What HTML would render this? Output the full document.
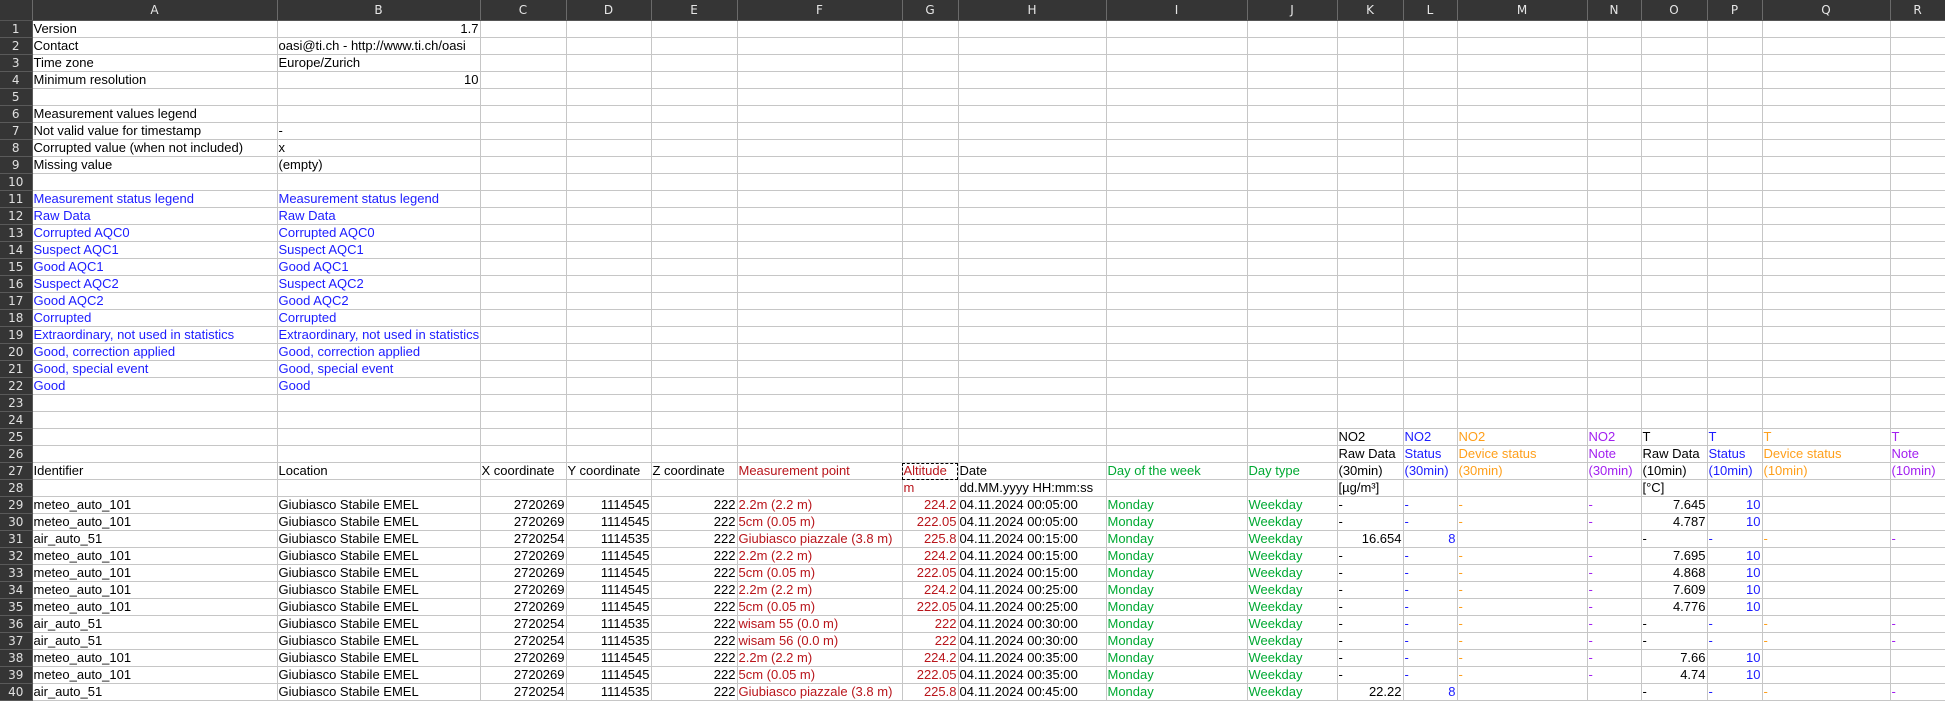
<!DOCTYPE html>
<html><head><meta charset="utf-8">
<style>
html,body{margin:0;padding:0;background:#fff;}
body{width:1945px;height:701px;overflow:hidden;font-family:"Liberation Sans",sans-serif;font-size:13px;color:#000;}
table{border-collapse:collapse;table-layout:fixed;width:1945px;}
td{height:16px;padding:0 1px;border-right:1px solid #c6c6c6;border-bottom:1px solid #c6c6c6;white-space:nowrap;overflow:hidden;line-height:16px;vertical-align:bottom;}
tr.h td{height:20px;background:#353535;color:#e6e6e6;text-align:center;border-right:1px solid #6a6a6a;border-bottom:1px solid #555;font-family:"DejaVu Sans",sans-serif;font-size:12px;vertical-align:middle;}
td.rh{background:#353535;color:#e0e0e0;text-align:center;border-right:1px solid #5a5a5a;border-bottom:1px solid #5a5a5a;font-family:"DejaVu Sans",sans-serif;font-size:12px;}
.r{text-align:right;}
.b{color:#1c1cff;}.rd{color:#b8151b;}.g{color:#00a933;}.o{color:#ff9f1a;}.p{color:#a21ff0;}
.alt{outline:1px dashed #000;outline-offset:-1px;}
</style></head><body>
<table>
<colgroup><col style="width:32px"><col style="width:245px"><col style="width:203px"><col style="width:86px"><col style="width:85px"><col style="width:86px"><col style="width:165px"><col style="width:56px"><col style="width:148px"><col style="width:141px"><col style="width:90px"><col style="width:66px"><col style="width:54px"><col style="width:130px"><col style="width:54px"><col style="width:66px"><col style="width:55px"><col style="width:128px"><col style="width:55px"></colgroup>
<tr class="h"><td></td><td>A</td><td>B</td><td>C</td><td>D</td><td>E</td><td>F</td><td>G</td><td>H</td><td>I</td><td>J</td><td>K</td><td>L</td><td>M</td><td>N</td><td>O</td><td>P</td><td>Q</td><td>R</td></tr>
<tr><td class="rh">1</td><td>Version</td><td class="r">1.7</td><td></td><td></td><td></td><td></td><td></td><td></td><td></td><td></td><td></td><td></td><td></td><td></td><td></td><td></td><td></td><td></td></tr>
<tr><td class="rh">2</td><td>Contact</td><td>oasi@ti.ch - http://www.ti.ch/oasi</td><td></td><td></td><td></td><td></td><td></td><td></td><td></td><td></td><td></td><td></td><td></td><td></td><td></td><td></td><td></td><td></td></tr>
<tr><td class="rh">3</td><td>Time zone</td><td>Europe/Zurich</td><td></td><td></td><td></td><td></td><td></td><td></td><td></td><td></td><td></td><td></td><td></td><td></td><td></td><td></td><td></td><td></td></tr>
<tr><td class="rh">4</td><td>Minimum resolution</td><td class="r">10</td><td></td><td></td><td></td><td></td><td></td><td></td><td></td><td></td><td></td><td></td><td></td><td></td><td></td><td></td><td></td><td></td></tr>
<tr><td class="rh">5</td><td></td><td></td><td></td><td></td><td></td><td></td><td></td><td></td><td></td><td></td><td></td><td></td><td></td><td></td><td></td><td></td><td></td><td></td></tr>
<tr><td class="rh">6</td><td>Measurement values legend</td><td></td><td></td><td></td><td></td><td></td><td></td><td></td><td></td><td></td><td></td><td></td><td></td><td></td><td></td><td></td><td></td><td></td></tr>
<tr><td class="rh">7</td><td>Not valid value for timestamp</td><td>-</td><td></td><td></td><td></td><td></td><td></td><td></td><td></td><td></td><td></td><td></td><td></td><td></td><td></td><td></td><td></td><td></td></tr>
<tr><td class="rh">8</td><td>Corrupted value (when not included)</td><td>x</td><td></td><td></td><td></td><td></td><td></td><td></td><td></td><td></td><td></td><td></td><td></td><td></td><td></td><td></td><td></td><td></td></tr>
<tr><td class="rh">9</td><td>Missing value</td><td>(empty)</td><td></td><td></td><td></td><td></td><td></td><td></td><td></td><td></td><td></td><td></td><td></td><td></td><td></td><td></td><td></td><td></td></tr>
<tr><td class="rh">10</td><td></td><td></td><td></td><td></td><td></td><td></td><td></td><td></td><td></td><td></td><td></td><td></td><td></td><td></td><td></td><td></td><td></td><td></td></tr>
<tr><td class="rh">11</td><td class="b">Measurement status legend</td><td class="b">Measurement status legend</td><td></td><td></td><td></td><td></td><td></td><td></td><td></td><td></td><td></td><td></td><td></td><td></td><td></td><td></td><td></td><td></td></tr>
<tr><td class="rh">12</td><td class="b">Raw Data</td><td class="b">Raw Data</td><td></td><td></td><td></td><td></td><td></td><td></td><td></td><td></td><td></td><td></td><td></td><td></td><td></td><td></td><td></td><td></td></tr>
<tr><td class="rh">13</td><td class="b">Corrupted AQC0</td><td class="b">Corrupted AQC0</td><td></td><td></td><td></td><td></td><td></td><td></td><td></td><td></td><td></td><td></td><td></td><td></td><td></td><td></td><td></td><td></td></tr>
<tr><td class="rh">14</td><td class="b">Suspect AQC1</td><td class="b">Suspect AQC1</td><td></td><td></td><td></td><td></td><td></td><td></td><td></td><td></td><td></td><td></td><td></td><td></td><td></td><td></td><td></td><td></td></tr>
<tr><td class="rh">15</td><td class="b">Good AQC1</td><td class="b">Good AQC1</td><td></td><td></td><td></td><td></td><td></td><td></td><td></td><td></td><td></td><td></td><td></td><td></td><td></td><td></td><td></td><td></td></tr>
<tr><td class="rh">16</td><td class="b">Suspect AQC2</td><td class="b">Suspect AQC2</td><td></td><td></td><td></td><td></td><td></td><td></td><td></td><td></td><td></td><td></td><td></td><td></td><td></td><td></td><td></td><td></td></tr>
<tr><td class="rh">17</td><td class="b">Good AQC2</td><td class="b">Good AQC2</td><td></td><td></td><td></td><td></td><td></td><td></td><td></td><td></td><td></td><td></td><td></td><td></td><td></td><td></td><td></td><td></td></tr>
<tr><td class="rh">18</td><td class="b">Corrupted</td><td class="b">Corrupted</td><td></td><td></td><td></td><td></td><td></td><td></td><td></td><td></td><td></td><td></td><td></td><td></td><td></td><td></td><td></td><td></td></tr>
<tr><td class="rh">19</td><td class="b">Extraordinary, not used in statistics</td><td class="b">Extraordinary, not used in statistics</td><td></td><td></td><td></td><td></td><td></td><td></td><td></td><td></td><td></td><td></td><td></td><td></td><td></td><td></td><td></td><td></td></tr>
<tr><td class="rh">20</td><td class="b">Good, correction applied</td><td class="b">Good, correction applied</td><td></td><td></td><td></td><td></td><td></td><td></td><td></td><td></td><td></td><td></td><td></td><td></td><td></td><td></td><td></td><td></td></tr>
<tr><td class="rh">21</td><td class="b">Good, special event</td><td class="b">Good, special event</td><td></td><td></td><td></td><td></td><td></td><td></td><td></td><td></td><td></td><td></td><td></td><td></td><td></td><td></td><td></td><td></td></tr>
<tr><td class="rh">22</td><td class="b">Good</td><td class="b">Good</td><td></td><td></td><td></td><td></td><td></td><td></td><td></td><td></td><td></td><td></td><td></td><td></td><td></td><td></td><td></td><td></td></tr>
<tr><td class="rh">23</td><td></td><td></td><td></td><td></td><td></td><td></td><td></td><td></td><td></td><td></td><td></td><td></td><td></td><td></td><td></td><td></td><td></td><td></td></tr>
<tr><td class="rh">24</td><td></td><td></td><td></td><td></td><td></td><td></td><td></td><td></td><td></td><td></td><td></td><td></td><td></td><td></td><td></td><td></td><td></td><td></td></tr>
<tr><td class="rh">25</td><td></td><td></td><td></td><td></td><td></td><td></td><td></td><td></td><td></td><td></td><td>NO2</td><td class="b">NO2</td><td class="o">NO2</td><td class="p">NO2</td><td>T</td><td class="b">T</td><td class="o">T</td><td class="p">T</td></tr>
<tr><td class="rh">26</td><td></td><td></td><td></td><td></td><td></td><td></td><td></td><td></td><td></td><td></td><td>Raw Data</td><td class="b">Status</td><td class="o">Device status</td><td class="p">Note</td><td>Raw Data</td><td class="b">Status</td><td class="o">Device status</td><td class="p">Note</td></tr>
<tr><td class="rh">27</td><td>Identifier</td><td>Location</td><td>X coordinate</td><td>Y coordinate</td><td>Z coordinate</td><td class="rd">Measurement point</td><td class="rd alt">Altitude</td><td>Date</td><td class="g">Day of the week</td><td class="g">Day type</td><td>(30min)</td><td class="b">(30min)</td><td class="o">(30min)</td><td class="p">(30min)</td><td>(10min)</td><td class="b">(10min)</td><td class="o">(10min)</td><td class="p">(10min)</td></tr>
<tr><td class="rh">28</td><td></td><td></td><td></td><td></td><td></td><td></td><td class="rd">m</td><td>dd.MM.yyyy HH:mm:ss</td><td></td><td></td><td>[µg/m³]</td><td></td><td></td><td></td><td>[°C]</td><td></td><td></td><td></td></tr>
<tr><td class="rh">29</td><td>meteo_auto_101</td><td>Giubiasco Stabile EMEL</td><td class="r">2720269</td><td class="r">1114545</td><td class="r">222</td><td class="rd">2.2m (2.2 m)</td><td class="rd r">224.2</td><td>04.11.2024 00:05:00</td><td class="g">Monday</td><td class="g">Weekday</td><td>-</td><td class="b">-</td><td class="o">-</td><td class="p">-</td><td class="r">7.645</td><td class="b r">10</td><td></td><td></td></tr>
<tr><td class="rh">30</td><td>meteo_auto_101</td><td>Giubiasco Stabile EMEL</td><td class="r">2720269</td><td class="r">1114545</td><td class="r">222</td><td class="rd">5cm (0.05 m)</td><td class="rd r">222.05</td><td>04.11.2024 00:05:00</td><td class="g">Monday</td><td class="g">Weekday</td><td>-</td><td class="b">-</td><td class="o">-</td><td class="p">-</td><td class="r">4.787</td><td class="b r">10</td><td></td><td></td></tr>
<tr><td class="rh">31</td><td>air_auto_51</td><td>Giubiasco Stabile EMEL</td><td class="r">2720254</td><td class="r">1114535</td><td class="r">222</td><td class="rd">Giubiasco piazzale (3.8 m)</td><td class="rd r">225.8</td><td>04.11.2024 00:15:00</td><td class="g">Monday</td><td class="g">Weekday</td><td class="r">16.654</td><td class="b r">8</td><td></td><td></td><td>-</td><td class="b">-</td><td class="o">-</td><td class="p">-</td></tr>
<tr><td class="rh">32</td><td>meteo_auto_101</td><td>Giubiasco Stabile EMEL</td><td class="r">2720269</td><td class="r">1114545</td><td class="r">222</td><td class="rd">2.2m (2.2 m)</td><td class="rd r">224.2</td><td>04.11.2024 00:15:00</td><td class="g">Monday</td><td class="g">Weekday</td><td>-</td><td class="b">-</td><td class="o">-</td><td class="p">-</td><td class="r">7.695</td><td class="b r">10</td><td></td><td></td></tr>
<tr><td class="rh">33</td><td>meteo_auto_101</td><td>Giubiasco Stabile EMEL</td><td class="r">2720269</td><td class="r">1114545</td><td class="r">222</td><td class="rd">5cm (0.05 m)</td><td class="rd r">222.05</td><td>04.11.2024 00:15:00</td><td class="g">Monday</td><td class="g">Weekday</td><td>-</td><td class="b">-</td><td class="o">-</td><td class="p">-</td><td class="r">4.868</td><td class="b r">10</td><td></td><td></td></tr>
<tr><td class="rh">34</td><td>meteo_auto_101</td><td>Giubiasco Stabile EMEL</td><td class="r">2720269</td><td class="r">1114545</td><td class="r">222</td><td class="rd">2.2m (2.2 m)</td><td class="rd r">224.2</td><td>04.11.2024 00:25:00</td><td class="g">Monday</td><td class="g">Weekday</td><td>-</td><td class="b">-</td><td class="o">-</td><td class="p">-</td><td class="r">7.609</td><td class="b r">10</td><td></td><td></td></tr>
<tr><td class="rh">35</td><td>meteo_auto_101</td><td>Giubiasco Stabile EMEL</td><td class="r">2720269</td><td class="r">1114545</td><td class="r">222</td><td class="rd">5cm (0.05 m)</td><td class="rd r">222.05</td><td>04.11.2024 00:25:00</td><td class="g">Monday</td><td class="g">Weekday</td><td>-</td><td class="b">-</td><td class="o">-</td><td class="p">-</td><td class="r">4.776</td><td class="b r">10</td><td></td><td></td></tr>
<tr><td class="rh">36</td><td>air_auto_51</td><td>Giubiasco Stabile EMEL</td><td class="r">2720254</td><td class="r">1114535</td><td class="r">222</td><td class="rd">wisam 55 (0.0 m)</td><td class="rd r">222</td><td>04.11.2024 00:30:00</td><td class="g">Monday</td><td class="g">Weekday</td><td>-</td><td class="b">-</td><td class="o">-</td><td class="p">-</td><td>-</td><td class="b">-</td><td class="o">-</td><td class="p">-</td></tr>
<tr><td class="rh">37</td><td>air_auto_51</td><td>Giubiasco Stabile EMEL</td><td class="r">2720254</td><td class="r">1114535</td><td class="r">222</td><td class="rd">wisam 56 (0.0 m)</td><td class="rd r">222</td><td>04.11.2024 00:30:00</td><td class="g">Monday</td><td class="g">Weekday</td><td>-</td><td class="b">-</td><td class="o">-</td><td class="p">-</td><td>-</td><td class="b">-</td><td class="o">-</td><td class="p">-</td></tr>
<tr><td class="rh">38</td><td>meteo_auto_101</td><td>Giubiasco Stabile EMEL</td><td class="r">2720269</td><td class="r">1114545</td><td class="r">222</td><td class="rd">2.2m (2.2 m)</td><td class="rd r">224.2</td><td>04.11.2024 00:35:00</td><td class="g">Monday</td><td class="g">Weekday</td><td>-</td><td class="b">-</td><td class="o">-</td><td class="p">-</td><td class="r">7.66</td><td class="b r">10</td><td></td><td></td></tr>
<tr><td class="rh">39</td><td>meteo_auto_101</td><td>Giubiasco Stabile EMEL</td><td class="r">2720269</td><td class="r">1114545</td><td class="r">222</td><td class="rd">5cm (0.05 m)</td><td class="rd r">222.05</td><td>04.11.2024 00:35:00</td><td class="g">Monday</td><td class="g">Weekday</td><td>-</td><td class="b">-</td><td class="o">-</td><td class="p">-</td><td class="r">4.74</td><td class="b r">10</td><td></td><td></td></tr>
<tr><td class="rh">40</td><td>air_auto_51</td><td>Giubiasco Stabile EMEL</td><td class="r">2720254</td><td class="r">1114535</td><td class="r">222</td><td class="rd">Giubiasco piazzale (3.8 m)</td><td class="rd r">225.8</td><td>04.11.2024 00:45:00</td><td class="g">Monday</td><td class="g">Weekday</td><td class="r">22.22</td><td class="b r">8</td><td></td><td></td><td>-</td><td class="b">-</td><td class="o">-</td><td class="p">-</td></tr>
</table>
</body></html>
